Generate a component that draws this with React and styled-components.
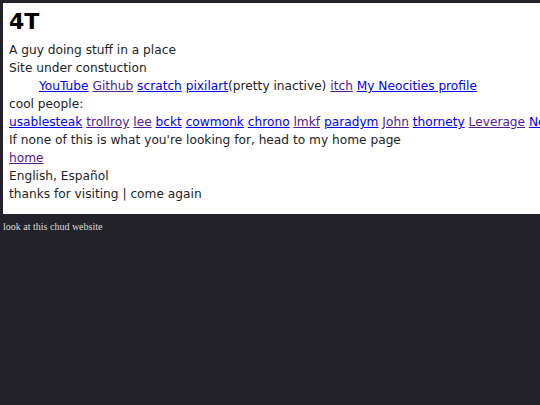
import styled, { createGlobalStyle } from 'styled-components';

const GlobalStyle = createGlobalStyle`
  html, body {
    margin: 0;
    background: #23222a;
  }
`;

const Page = styled.div`
  min-height: 100vh;
  padding-top: 3px;
`;

const Card = styled.main`
  margin-left: 3px;
  width: max-content;
  min-width: calc(100% - 3px);
  box-sizing: border-box;
  padding: 7px 6px 11px;
  background: #fff;
  color: #222;
  font-family: 'DejaVu Sans', Verdana, sans-serif;
  font-size: 12.2px;
`;

const Title = styled.h1`
  margin: 0 0 7px;
  font-size: 22px;
  line-height: 24px;
  font-weight: 700;
  color: #000;
`;

const Line = styled.p`
  margin: 0;
  line-height: 18px;
  white-space: nowrap;
  padding-left: ${({ indent }) => (indent ? '30px' : '0')};
`;

const A = styled.a`
  color: ${({ visited }) => (visited ? '#551a8b' : '#0000ee')};
  text-decoration: underline;
`;

const Footer = styled.p`
  margin: 7px 0 0 3px;
  font-family: 'Liberation Serif', 'Times New Roman', serif;
  font-size: 10px;
  line-height: 12px;
  color: #ddd;
`;

const socials = [
  { name: 'YouTube' },
  { name: 'Github', visited: true },
  { name: 'scratch' },
  { name: 'pixilart', after: '(pretty inactive)' },
  { name: 'itch', visited: true },
  { name: 'My Neocities profile' },
];

const people = [
  { name: 'usablesteak' },
  { name: 'trollroy', visited: true },
  { name: 'lee', visited: true },
  { name: 'bckt' },
  { name: 'cowmonk' },
  { name: 'chrono' },
  { name: 'lmkf', visited: true },
  { name: 'paradym' },
  { name: 'John', visited: true },
  { name: 'thornety' },
  { name: 'Leverage', visited: true },
  { name: 'Nobody' },
];

const LinkList = ({ items }) =>
  items.map((item, i) => (
    <span key={item.name}>
      {i > 0 && !items[i - 1].after ? ' ' : ''}
      <A href="#" visited={item.visited ? 1 : 0}>
        {item.name}
      </A>
      {item.after && `${item.after} `}
    </span>
  ));

const App = () => (
  <>
    <GlobalStyle />
    <Page>
      <Card>
        <Title>4T</Title>
        <Line>A guy doing stuff in a place</Line>
        <Line>Site under constuction</Line>
        <Line indent>
          <LinkList items={socials} />
        </Line>
        <Line>cool people:</Line>
        <Line>
          <LinkList items={people} />
        </Line>
        <Line>If none of this is what you're looking for, head to my home page</Line>
        <Line>
          <A href="#" visited={1}>
            home
          </A>
        </Line>
        <Line>English, Español</Line>
        <Line>thanks for visiting | come again</Line>
      </Card>
      <Footer>look at this chud website</Footer>
    </Page>
  </>
);

export default App;
